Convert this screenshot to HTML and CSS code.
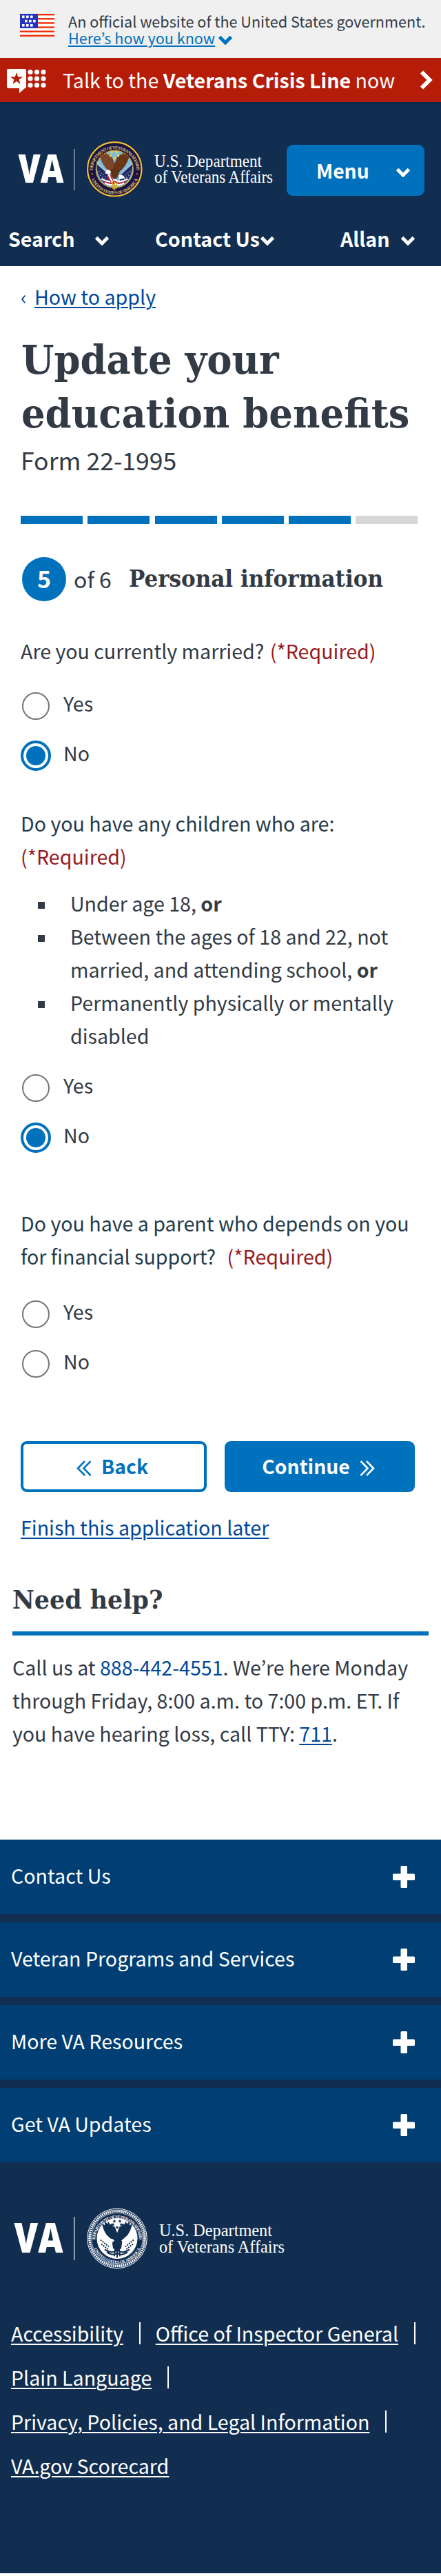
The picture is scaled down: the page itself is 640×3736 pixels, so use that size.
FILE: index.html
```html
<!DOCTYPE html>
<html lang="en">
<head>
<meta charset="utf-8">
<title>Update your education benefits</title>
<link rel="stylesheet" href="styles.css">
</head>
<body>
<svg width="0" height="0" class="defs">
  <defs>
    <symbol id="chev" viewBox="0 0 22 14"><path d="M2.6 2.6 L11 11 L19.4 2.6" fill="none" stroke="currentColor" stroke-width="5"/></symbol>
    <symbol id="plus" viewBox="0 0 32 32"><rect x="11.5" y="0" width="9.5" height="32" rx="1.5" fill="currentColor"/><rect x="0" y="11.5" width="32" height="9.5" rx="1.5" fill="currentColor"/></symbol>
    <path id="arcTop" d="M-32 3 A32 32 0 0 1 32 3"/>
    <path id="arcBottom" d="M-36 8 A37 37 0 0 0 36 8"/>
    <path id="wing" d="M-3 6 C-8 4 -14 -2 -17 -8 C-20 -13 -21 -17 -22 -22 L-18 -19 L-18 -25 L-14 -21 L-13 -25 L-10 -20 L-8 -22 L-6 -17 L-4 -18 C-2 -14 -1 -10 1 -6 L3 4Z"/>
    <path id="star" d="M0 -2.6 L.7 -.8 L2.6 -.7 L1.1 .5 L1.6 2.4 L0 1.3 L-1.6 2.4 L-1.1 .5 L-2.6 -.7 L-.7 -.8Z"/>
  </defs>
</svg>

<div class="gov">
  <svg class="flag" width="50" height="33" viewBox="0 0 50 33">
    <rect width="50" height="33" fill="#fff"/>
    <g fill="#f22e06"><rect width="50" height="2.4"/><rect y="6" width="50" height="2.4"/><rect y="12.2" width="50" height="2.4"/><rect y="18.4" width="50" height="2.4"/><rect y="24.5" width="50" height="2.4"/><rect y="30.6" width="50" height="2.4"/></g>
    <rect width="26" height="21" fill="#2433bd"/>
    <g fill="#fff"><rect x="3" y="2.5" width="3.6" height="3.6"/><rect x="9" y="2.5" width="3.6" height="3.6"/><rect x="15" y="2.5" width="3.6" height="3.6"/><rect x="7" y="8.8" width="3.6" height="3.6"/><rect x="13" y="8.8" width="3.6" height="3.6"/><rect x="19" y="8.8" width="3.6" height="3.6"/><rect x="3" y="15" width="3.6" height="3.6"/><rect x="9" y="15" width="3.6" height="3.6"/><rect x="15" y="15" width="3.6" height="3.6"/></g>
  </svg>
  <div class="gov-text">An official website of the United States government.<br><a class="gov-link">Here’s how you know</a><svg class="gov-chev" width="22" height="14"><use href="#chev"/></svg></div>
</div>

<div class="crisis">
  <svg width="57" height="36" viewBox="0 0 57 36">
    <path d="M2 0 H26 a2 2 0 0 1 2 2 V26 a2 2 0 0 1-2 2 L18 35 V28 H2 a2 2 0 0 1-2-2 V2 a2 2 0 0 1 2-2Z" fill="#fff"/>
    <path d="M14 5 L16.2 11.4 L23 11.5 L17.6 15.6 L19.6 22 L14 18.1 L8.4 22 L10.4 15.6 L5 11.5 L11.8 11.4Z" fill="#b51d09"/>
    <g fill="#fff"><circle cx="34" cy="4.5" r="3.6"/><circle cx="43.500" cy="4.500" r="3.600"/><circle cx="53" cy="4.500" r="3.600"/><circle cx="34" cy="14" r="3.600"/><circle cx="43.500" cy="14" r="3.600"/><circle cx="53" cy="14" r="3.600"/><circle cx="34" cy="23.500" r="3.600"/><circle cx="43.500" cy="23.500" r="3.600"/><circle cx="53" cy="23.500" r="3.600"/></g>
  </svg>
  <span class="crisis-text">Talk to the <b>Veterans Crisis Line</b> now</span>
  <svg width="19" height="28" viewBox="0 0 19 28"><path d="M3 2.500 L14.500 14 L3 25.500" fill="none" stroke="#fff" stroke-width="6"/></svg>
</div>

<header class="header">
  <div class="brand">
    <svg class="logo" width="416" height="90" viewBox="0 0 416 90">
      <text class="va" x="26.500" y="64.500" font-size="56.500" textLength="66" lengthAdjust="spacingAndGlyphs">VA</text>
      <rect x="107" y="16" width="1.500" height="60" fill="#8f9cad"/>
      <g transform="translate(166.300 45.300)">
        <circle r="41" fill="#1a1446"/>
        <circle r="39.200" fill="none" stroke="#f2c230" stroke-width="2.200"/>
        <circle r="27" fill="#7dbbdb" stroke="#d9a928" stroke-width="1.200"/>
        <g class="ring gold"><text font-size="6.400"><textPath href="#arcTop" startOffset="50%" text-anchor="middle" textLength="98">DEPARTMENT OF VETERANS AFFAIRS</textPath></text><text font-size="6.400"><textPath href="#arcBottom" startOffset="50%" text-anchor="middle" textLength="84">UNITED STATES OF AMERICA</textPath></text></g>
        <path d="M-26 -7 L-6 10 L-10 23 C-20 19 -26 8 -26 -7Z M26 -7 L6 10 L10 23 C20 19 26 8 26 -7Z" fill="#232a68"/>
        <g stroke="#c9cde3" stroke-width="1.400" stroke-dasharray="1 3"><path d="M-23 3 L-10 13 M-21 9 L-12 16 M23 3 L11 13 M21 9 L12 16"/></g>
        <g stroke-width="2.200" fill="none"><path d="M-19 14 Q-8 21 0 15 Q8 21 19 14" stroke="#fff"/><path d="M-17 17 Q-8 24 0 18 Q8 24 17 17" stroke="#c8202f"/><path d="M-14 20 Q-6 25 0 21 Q6 25 14 20" stroke="#fff"/><path d="M-11 10 L-5 18 M-6 8 L-1 22" stroke="#c8202f"/><path d="M-9 8 L-3 19" stroke="#fff"/></g>
        <use href="#wing" fill="#7c4526"/><use href="#wing" transform="scale(-1 1)" fill="#6b3518"/>
        <path d="M-8 1 Q0 -3 8 2 L4 12 Q0 17 -3 12Z" fill="#613317"/>
        <path d="M-12 2 Q-8 -1 -5 4 L-8 8 L-14 6Z M6 9 Q12 6 15 13 L7 15Z" fill="#fff"/>
        <path d="M-4 18 L-2 29 M0 18 L0 31 M4 18 L2 29" stroke="#dfab25" stroke-width="1.600"/>
        <g fill="#f3d43b"><use href="#star" x="-4" y="-25"/><use href="#star" x="3" y="-25"/><use href="#star" x="-6" y="-20"/><use href="#star" x="5" y="-20"/><use href="#star" x="0" y="-16"/></g>
        <path d="M-26 -11 L-6 10 M26 -9 L8 9" stroke="#dedede"/>
        <circle cx="-32.500" cy="7" r="1" fill="#f2c230"/><circle cx="32.500" cy="7" r="1" fill="#f2c230"/>
      </g>
      <text class="dept" x="224" y="41.700" font-size="24.800" textLength="156" lengthAdjust="spacingAndGlyphs">U.S. Department</text>
      <text class="dept" x="224" y="64.500" font-size="24.800" textLength="172" lengthAdjust="spacingAndGlyphs">of Veterans Affairs</text>
    </svg>
    <button class="menu"><span>Menu</span><svg width="22" height="14"><use href="#chev"/></svg></button>
  </div>
  <nav class="nav">
    <a class="n-search">Search<svg width="22" height="14"><use href="#chev"/></svg></a>
    <a class="n-contact">Contact Us<svg width="22" height="14"><use href="#chev"/></svg></a>
    <a class="n-user">Allan<svg width="22" height="14"><use href="#chev"/></svg></a>
  </nav>
</header>

<main class="main">
  <div class="back-link"><span class="angle">‹</span><a>How to apply</a></div>
  <h1 class="title"><span>Update your</span><br><span>education benefits</span></h1>
  <div class="form-no">Form 22-1995</div>
  <div class="progress"><i></i><i></i><i></i><i></i><i></i><i class="todo"></i></div>
  <div class="step"><span class="circle">5</span><span class="of">of 6</span><h2 class="step-name">Personal information</h2></div>

  <div class="q q1">Are you currently married? <span class="req">(*Required)</span></div>
  <div class="radios r1">
    <label class="radio"><i></i><span>Yes</span></label>
    <label class="radio on"><i></i><span>No</span></label>
  </div>

  <div class="q q2">Do you have any children who are:<br><span class="req">(*Required)</span></div>
  <ul class="list">
    <li>Under age 18, <b>or</b></li>
    <li>Between the ages of 18 and 22, not<br>married, and attending school, <b>or</b></li>
    <li>Permanently physically or mentally<br>disabled</li>
  </ul>
  <div class="radios r2">
    <label class="radio"><i></i><span>Yes</span></label>
    <label class="radio on"><i></i><span>No</span></label>
  </div>

  <div class="q q3">Do you have a parent who depends on you<br>for financial support? <span class="req gap">(*Required)</span></div>
  <div class="radios r3">
    <label class="radio"><i></i><span>Yes</span></label>
    <label class="radio"><i></i><span>No</span></label>
  </div>

  <div class="actions">
    <button class="btn back"><svg width="22" height="23" viewBox="0 0 22 23"><path d="M12 1.200 L2 11.500 L12 21.800 M20.500 1.200 L10.500 11.500 L20.500 21.800" fill="none" stroke="currentColor" stroke-width="2.600"/></svg>Back</button>
    <button class="btn next">Continue<svg width="22" height="23" viewBox="0 0 22 23"><path d="M10 1.200 L20 11.500 L10 21.800 M1.500 1.200 L11.500 11.500 L1.500 21.800" fill="none" stroke="currentColor" stroke-width="2.600"/></svg></button>
  </div>
  <div class="finish"><a>Finish this application later</a></div>
</main>

<section class="help">
  <h2 class="help-title"><span>Need help?</span></h2>
  <p class="help-text">Call us at <span class="tel">888-442-4551</span>. We’re here Monday<br>through Friday, 8:00 a.m. to 7:00 p.m. ET. If<br>you have hearing loss, call TTY: <a>711</a>.</p>
</section>

<footer class="footer">
  <div class="acc"><span>Contact Us</span><svg width="32" height="32"><use href="#plus"/></svg></div>
  <div class="acc"><span>Veteran Programs and Services</span><svg width="32" height="32"><use href="#plus"/></svg></div>
  <div class="acc"><span>More VA Resources</span><svg width="32" height="32"><use href="#plus"/></svg></div>
  <div class="acc"><span>Get VA Updates</span><svg width="32" height="32"><use href="#plus"/></svg></div>
  <svg class="foot-logo" width="430" height="100" viewBox="0 0 430 100">
    <text class="va" x="20.500" y="70.500" font-size="59.500" textLength="71" lengthAdjust="spacingAndGlyphs">VA</text>
    <rect x="107" y="19" width="1.500" height="63" fill="#c3cad3"/>
    <g transform="translate(170 50.400)">
      <circle r="43.200" fill="none" stroke="#fff" stroke-width="1"/>
      <circle r="40" fill="none" stroke="#fff" stroke-width="3.600" stroke-dasharray="1.900 1"/>
      <circle r="37.300" fill="none" stroke="#fff" stroke-width=".7"/>
      <circle r="29.500" fill="#fff"/>
      <g class="ring white"><text font-size="6.400"><textPath href="#arcTop" startOffset="50%" text-anchor="middle" textLength="98">DEPARTMENT OF VETERANS AFFAIRS</textPath></text><text font-size="6"><textPath href="#arcBottom" startOffset="50%" text-anchor="middle" textLength="84">UNITED STATES OF AMERICA</textPath></text></g>
      <g fill="#112e51"><use href="#wing"/><use href="#wing" transform="scale(-1 1)"/>
        <path d="M-8 0 L8 0 L6 14 L0 20 L-6 14Z"/>
        <use href="#star" x="-4" y="-25"/><use href="#star" x="4" y="-25"/><use href="#star" x="-6" y="-20"/><use href="#star" x="6" y="-20"/><use href="#star" x="0" y="-16"/></g>
      <g stroke="#112e51" fill="none" stroke-width="2"><path d="M-24 2 L-12 12 M-23 8 L-12 17 M24 2 L12 12 M23 8 L12 17" stroke-dasharray="2 1.500"/><path d="M-18 16 Q-8 23 0 17 Q8 23 18 16 M-15 20 Q-6 26 0 21 Q6 26 15 20 M-3 16 L-4 26 M0 18 L0 28 M3 16 L4 26"/></g>
      <path d="M-24 -11 L-7 4 M24 -11 L7 4" stroke="#fff" stroke-width="2.400"/>
      <path d="M-11 1 Q-7 -1 -4 3 L-7 6 L-12 4Z" fill="#fff"/>
    </g>
    <text class="dept" x="231" y="46.500" font-size="26" textLength="164" lengthAdjust="spacingAndGlyphs">U.S. Department</text>
    <text class="dept" x="231" y="70.500" font-size="26" textLength="182" lengthAdjust="spacingAndGlyphs">of Veterans Affairs</text>
  </svg>
  <div class="links">
    <div><a>Accessibility</a><i></i><a>Office of Inspector General</a><i></i></div>
    <div><a>Plain Language</a><i></i></div>
    <div><a>Privacy, Policies, and Legal Information</a><i></i></div>
    <div><a>VA.gov Scorecard</a></div>
  </div>
</footer>
</body>
</html>
```
FILE: styles.css
```css
* { box-sizing: border-box; }
body {
  margin: 0;
  width: 640px;
  background: #fff;
  color: #323a45;
  font-family: "Noto Sans CJK JP", "Noto Sans CJK SC", sans-serif;
  font-size: 28.6px;
  line-height: 48px;
  overflow-x: hidden;
}
.defs { display: block; position: absolute; }
svg { display: block; flex: none; }
h1, h2, p, ul { margin: 0; padding: 0; font-weight: 400; }
button { border: 0; font-family: inherit; color: inherit; }

/* banners */
.gov { display: flex; gap: 20px; height: 84px; background: #f0f0f0; padding: 20px 0 0 29px; }
.gov-text { font-size: 21.6px; line-height: 24px; margin-top: -1px; white-space: nowrap; }
.gov-link { color: #0071bc; text-decoration: underline; text-decoration-thickness: 2px; text-underline-offset: 2px; }
.gov-chev { display: inline-block; margin-left: 4px; color: #0071bc; vertical-align: -1px; }
.crisis { display: flex; align-items: flex-start; height: 64px; padding: 16px 12px 0 10px; background: #b51d09; color: #fff; }
.crisis-text { flex: 1; margin: -8px 0 0 24px; font-size: 28.6px; white-space: nowrap; }
.crisis > svg:last-child { margin-top: 2px; }

/* header */
.header { height: 238px; background: linear-gradient(#0f2b4c, #112e51 12px); color: #fff; font-weight: 700; }
.brand { display: flex; padding-top: 52px; }
.menu { display: flex; align-items: center; justify-content: space-between; width: 200px; height: 74px; margin-top: 10px; padding: 0 20px 0 43px; border-radius: 9px; background: #0071bc; font-weight: 700; font-size: 28.3px; line-height: 48px; }
.menu svg { margin-top: 6px; }
.logo { flex: none; }
.va { fill: #fff; font-family: "Open Sans", sans-serif; font-weight: 800; }
.dept { fill: #fff; font-family: "Liberation Serif", serif; font-weight: 400; }
.ring { font-family: "Liberation Serif", serif; font-weight: 700; }
.gold { fill: #e5c565; }
.white { fill: #fff; }
.nav { display: flex; padding-top: 32px; height: 90px; font-size: 28.6px; }
.nav a { display: flex; align-items: center; height: 48px; white-space: nowrap; }
.nav svg { margin-top: 6px; }
.n-search { width: 213px; padding-left: 12px; gap: 29px; }
.n-contact { width: 267px; padding-left: 12px; }
.n-user { padding-left: 14px; gap: 15px; }

/* form */
.main { padding: 20px 32px 0 30px; }
.back-link { display: flex; gap: 13px; color: #00489a; }
.angle { width: 7px; }
.back-link a, .finish a, .help-text a { color: #00489a; text-decoration: underline; text-decoration-thickness: 2px; text-underline-offset: 3px; }
.title { margin: 29px 0 0 1px; font: 700 58px/78px "DejaVu Serif Condensed", "DejaVu Serif", serif; white-space: nowrap; }
.title span, .step-name, .help-title span { display: inline-block; transform-origin: 0 50%; }
.title span { transform: scaleX(1.043); }
.form-no { margin-top: 4px; font-size: 35.600px; }
.progress { display: flex; gap: 7.300px; margin-top: 57px; }
.progress i { width: 90px; height: 12px; background: #0071bc; }
.progress .todo { background: #d6d7d9; }
.step { display: flex; align-items: center; height: 64px; margin: 48px 0 0 2px; white-space: nowrap; }
.circle { width: 64px; height: 64px; border-radius: 50%; background: #0071bc; color: #fff; font-weight: 700; font-size: 34px; line-height: 62px; text-align: center; }
.of { width: 80px; padding: 0 0 2px 11px; font-size: 32px; }
.step-name { margin-left: 11px; font: 700 33px/48px "DejaVu Serif Condensed", "DejaVu Serif", serif; transform: scaleX(1.045); }
.q { white-space: nowrap; }
.q1 { margin-top: 48px; }
.q2, .q3 { color: #243b4a; }
.q2 { margin-top: 38px; }
.q3 { margin-top: 64px; }
.req { color: #981b1e; margin-left: 2px; }
.q2 .req { margin-left: 0; }
.req.gap { margin-left: 10px; }
.r1 { margin-top: 20px; }
.r2 { margin-top: 16px; }
.r3 { margin-top: 24px; }
.radio { display: flex; align-items: center; height: 72px; }
.radio i { flex: none; width: 40px; height: 40px; margin-left: 2px; border: 2px solid #757575; border-radius: 50%; }
.radio span { margin: 0 0 9px 20px; }
.radio.on i { width: 44px; height: 44px; margin-left: 0; border: 4px solid #0071bc; padding: 4px; background: #0071bc content-box; }
.radio.on span { margin-left: 18px; }
.list { list-style: none; margin: 20px 0 0 72px; white-space: nowrap; }
.list li::before { content: ""; float: left; width: 10px; height: 10px; margin: 22px 0 0 -47px; background: #323a45; }
.actions { display: flex; gap: 26px; margin-top: 76px; }
.btn { display: flex; align-items: center; justify-content: center; gap: 14px; height: 74px; border-radius: 9px; padding: 0 0 2px; font-size: 28.3px; font-weight: 700; line-height: 48px; }
.btn svg { margin-top: 6px; }
.back { width: 270px; border: 4px solid #0071bc; background: #fff; color: #0071bc; padding-right: 4px; }
.next { width: 276px; background: #0071bc; color: #fff; padding-right: 4px; }
.finish { margin-top: 27px; }

/* help */
.help { padding: 57px 18px 130px; }
.help-title { height: 76px; border-bottom: 6px solid #0071bc; font: 700 38px/48px "DejaVu Serif Condensed", "DejaVu Serif", serif; }
.help-title span { transform: scaleX(1.02); }
.help-text { margin-top: 22px; white-space: nowrap; }
.tel { color: #00489a; }

/* footer */
.footer { height: 1064px; background: #112e51; color: #fff; }
.acc { display: flex; align-items: center; justify-content: space-between; height: 108px; margin-bottom: 12px; padding: 0 38px 0 16px; background: #003e73; font-size: 28.6px; }
.acc span { padding-bottom: 4px; }
.foot-logo { margin-top: 60px; }
.links { padding: 56px 0 0 16px; font-size: 28.6px; line-height: 64px; }
.links div { display: flex; align-items: center; height: 64px; }
.links a { text-decoration: underline; text-decoration-thickness: 2px; text-underline-offset: 3px; white-space: nowrap; }
.links i { width: 2px; height: 32px; margin: 0 22px 0 23px; background: #fff; }
```
